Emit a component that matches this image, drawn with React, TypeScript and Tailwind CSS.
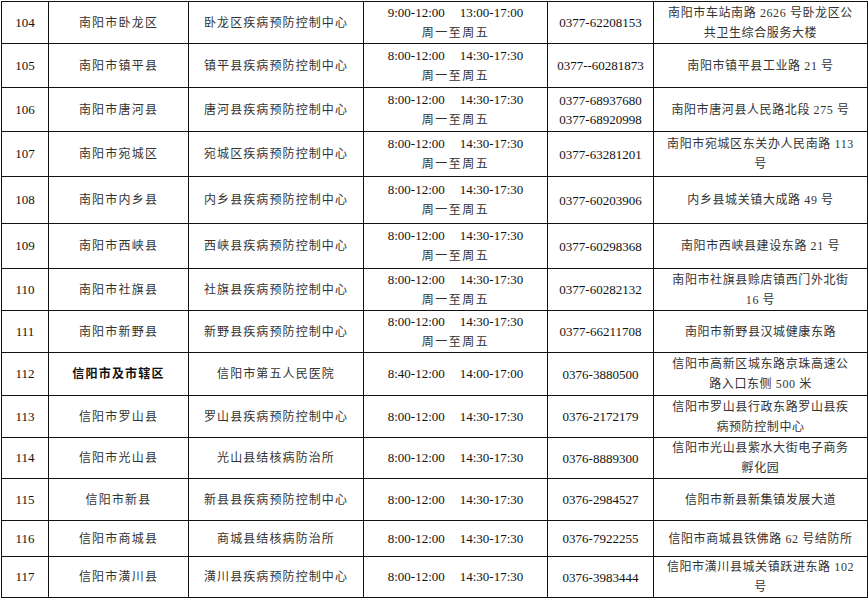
import React from 'react';

type Row = {
  no: string;
  city: string;
  center: string;
  hours: [string, string];
  weekday?: boolean;
  phones: string[];
  addr: string[];
  h: string;
  bold?: boolean;
};

const rows: Row[] = [
  { no: '104', city: '南阳市卧龙区', center: '卧龙区疾病预防控制中心', hours: ['9:00-12:00', '13:00-17:00'], weekday: true, phones: ['0377-62208153'], addr: ['南阳市车站南路 2626 号卧龙区公', '共卫生综合服务大楼'], h: 'h-[42px]' },
  { no: '105', city: '南阳市镇平县', center: '镇平县疾病预防控制中心', hours: ['8:00-12:00', '14:30-17:30'], weekday: true, phones: ['0377--60281873'], addr: ['南阳市镇平县工业路 21 号'], h: 'h-[44px]' },
  { no: '106', city: '南阳市唐河县', center: '唐河县疾病预防控制中心', hours: ['8:00-12:00', '14:30-17:30'], weekday: true, phones: ['0377-68937680', '0377-68920998'], addr: ['南阳市唐河县人民路北段 275 号'], h: 'h-[44px]' },
  { no: '107', city: '南阳市宛城区', center: '宛城区疾病预防控制中心', hours: ['8:00-12:00', '14:30-17:30'], weekday: true, phones: ['0377-63281201'], addr: ['南阳市宛城区东关办人民南路 113', '号'], h: 'h-[45px]' },
  { no: '108', city: '南阳市内乡县', center: '内乡县疾病预防控制中心', hours: ['8:00-12:00', '14:30-17:30'], weekday: true, phones: ['0377-60203906'], addr: ['内乡县城关镇大成路 49 号'], h: 'h-[47px]' },
  { no: '109', city: '南阳市西峡县', center: '西峡县疾病预防控制中心', hours: ['8:00-12:00', '14:30-17:30'], weekday: true, phones: ['0377-60298368'], addr: ['南阳市西峡县建设东路 21 号'], h: 'h-[45px]' },
  { no: '110', city: '南阳市社旗县', center: '社旗县疾病预防控制中心', hours: ['8:00-12:00', '14:30-17:30'], weekday: true, phones: ['0377-60282132'], addr: ['南阳市社旗县赊店镇西门外北街', '16 号'], h: 'h-[42px]' },
  { no: '111', city: '南阳市新野县', center: '新野县疾病预防控制中心', hours: ['8:00-12:00', '14:30-17:30'], weekday: true, phones: ['0377-66211708'], addr: ['南阳市新野县汉城健康东路'], h: 'h-[42px]' },
  { no: '112', city: '信阳市及市辖区', bold: true, center: '信阳市第五人民医院', hours: ['8:40-12:00', '14:00-17:00'], phones: ['0376-3880500'], addr: ['信阳市高新区城东路京珠高速公', '路入口东侧 500 米'], h: 'h-[43px]' },
  { no: '113', city: '信阳市罗山县', center: '罗山县疾病预防控制中心', hours: ['8:00-12:00', '14:30-17:30'], phones: ['0376-2172179'], addr: ['信阳市罗山县行政东路罗山县疾', '病预防控制中心'], h: 'h-[42px]' },
  { no: '114', city: '信阳市光山县', center: '光山县结核病防治所', hours: ['8:00-12:00', '14:30-17:30'], phones: ['0376-8889300'], addr: ['信阳市光山县紫水大街电子商务', '孵化园'], h: 'h-[41px]' },
  { no: '115', city: '信阳市新县', center: '新县县疾病预防控制中心', hours: ['8:00-12:00', '14:30-17:30'], phones: ['0376-2984527'], addr: ['信阳市新县新集镇发展大道'], h: 'h-[42px]' },
  { no: '116', city: '信阳市商城县', center: '商城县结核病防治所', hours: ['8:00-12:00', '14:30-17:30'], phones: ['0376-7922255'], addr: ['信阳市商城县铁佛路 62 号结防所'], h: 'h-[36px]' },
  { no: '117', city: '信阳市潢川县', center: '潢川县疾病预防控制中心', hours: ['8:00-12:00', '14:30-17:30'], phones: ['0376-3983444'], addr: ['信阳市潢川县城关镇跃进东路 102', '号'], h: 'h-[41px]' },
];

const cell = 'border border-[#111] p-0 text-center align-middle';

export default function App() {
  return (
    <div className="bg-white w-[868px] h-[599px] pt-px pl-px text-[#111] font-['Liberation_Serif','Noto_Sans_CJK_SC',serif]">
      <table className="border-collapse table-fixed w-[866px]">
        <colgroup>
          <col className="w-[47px]" />
          <col className="w-[140px]" />
          <col className="w-[175px]" />
          <col className="w-[184px]" />
          <col className="w-[106px]" />
          <col className="w-[214px]" />
        </colgroup>
        <tbody>
          {rows.map((r) => (
            <tr key={r.no} className={r.h}>
              <td className={`${cell} text-[13px]`}>{r.no}</td>
              <td className={`${cell} text-[12px] tracking-[1.2px] ${r.bold ? 'font-bold text-[#111]' : 'text-[#333]'}`}>{r.city}</td>
              <td className={`${cell} text-[12px] tracking-[1.1px] text-[#333]`}>{r.center}</td>
              <td className={`${cell} text-[13px] leading-[20px]`}>
                <div>
                  <span className="mr-[15px]">{r.hours[0]}</span>
                  <span>{r.hours[1]}</span>
                </div>
                {r.weekday && <div className="text-[12px] tracking-[1.5px] text-[#333]">周一至周五</div>}
              </td>
              <td className={`${cell} text-[13px] leading-[19px]`}>
                {r.phones.map((p) => (
                  <div key={p}>{p}</div>
                ))}
              </td>
              <td className={`${cell} text-[12px] tracking-[0.6px] leading-[20px] text-[#333]`}>
                {r.addr.map((a) => (
                  <div key={a} className="whitespace-nowrap">{a}</div>
                ))}
              </td>
            </tr>
          ))}
        </tbody>
      </table>
    </div>
  );
}
